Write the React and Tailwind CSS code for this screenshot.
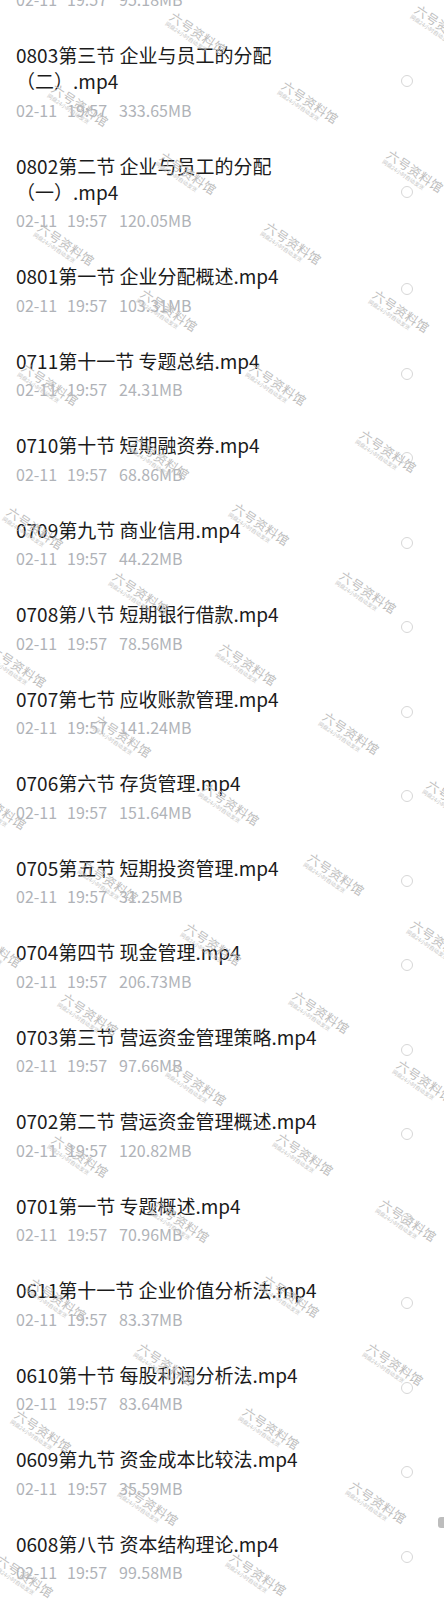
import React from "react";

const items = [
  ["0803第三节 企业与员工的分配（二）.mp4", "333.65MB"],
  ["0802第二节 企业与员工的分配（一）.mp4", "120.05MB"],
  ["0801第一节 企业分配概述.mp4", "103.31MB"],
  ["0711第十一节 专题总结.mp4", "24.31MB"],
  ["0710第十节 短期融资券.mp4", "68.86MB"],
  ["0709第九节 商业信用.mp4", "44.22MB"],
  ["0708第八节 短期银行借款.mp4", "78.56MB"],
  ["0707第七节 应收账款管理.mp4", "141.24MB"],
  ["0706第六节 存货管理.mp4", "151.64MB"],
  ["0705第五节 短期投资管理.mp4", "31.25MB"],
  ["0704第四节 现金管理.mp4", "206.73MB"],
  ["0703第三节 营运资金管理策略.mp4", "97.66MB"],
  ["0702第二节 营运资金管理概述.mp4", "120.82MB"],
  ["0701第一节 专题概述.mp4", "70.96MB"],
  ["0611第十一节 企业价值分析法.mp4", "83.37MB"],
  ["0610第十节 每股利润分析法.mp4", "83.64MB"],
  ["0609第九节 资金成本比较法.mp4", "35.59MB"],
  ["0608第八节 资本结构理论.mp4", "99.58MB"],
];

const marks = [
  [195, 37], [440, 30], [77, 109], [307, 106], [185, 177], [412, 175],
  [63, 248], [290, 247], [166, 314], [398, 315], [47, 388], [275, 388],
  [385, 455], [158, 462], [32, 532], [258, 528], [138, 597], [365, 596],
  [15, 670], [245, 668], [120, 740], [348, 737], [228, 808], [452, 805],
  [-5, 812], [107, 885], [333, 878], [210, 948], [436, 945], [-10, 950],
  [87, 1018], [318, 1016], [195, 1088], [422, 1085], [77, 1160], [302, 1158],
  [178, 1225], [405, 1224], [55, 1303], [288, 1300], [163, 1368], [392, 1368],
  [40, 1435], [268, 1432], [147, 1508], [375, 1506], [22, 1580], [255, 1578],
];

function Meta({ size }) {
  return (
    <div className="h-[22px] leading-[22px] text-[16px] text-[#b0b3b8] whitespace-nowrap">
      <span>02-11</span>
      <span className="ml-[10px]">19:57</span>
      <span className="ml-[12px]">{size}</span>
    </div>
  );
}

function Row({ title, size }) {
  return (
    <div className="flex items-center pl-4 pr-[31px] pt-4 pb-4">
      <div className="flex-1 min-w-0 flex flex-col gap-[4.5px]">
        <div className="text-[19px] leading-[26px] text-[#1b1b1b]">{title}</div>
        <Meta size={size} />
      </div>
      <div className="ml-[40px] w-3 h-3 shrink-0 rounded-full border-[1.5px] border-[#d7d7d7]" />
    </div>
  );
}

function Mark({ x, y }) {
  return (
    <div
      className="absolute w-[64px] -translate-x-1/2 -translate-y-1/2 rotate-[34deg] flex flex-col items-start leading-none"
      style={{ left: x, top: y }}
    >
      <span className="text-[12.5px] leading-[14px] text-[#bdbdbd] tracking-[0.5px] whitespace-nowrap">六号资料馆</span>
      <span className="text-[9px] leading-[10px] text-[#c6c6c6] whitespace-nowrap scale-[0.6] origin-top-left">网盘24小时自动发货</span>
    </div>
  );
}

export default function App() {
  return (
    <div className="relative w-[444px] h-[1600px] overflow-hidden bg-white font-['Noto_Sans_CJK_SC','Noto_Sans',sans-serif]">
      <div className="flex flex-col">
        <div className="pl-4 mt-[-12px] pb-4">
          <Meta size="95.18MB" />
        </div>
        {items.map(([t, s]) => (
          <Row key={t} title={t} size={s} />
        ))}
      </div>
      <div className="absolute inset-0 pointer-events-none">
        {marks.map(([x, y], i) => (
          <Mark key={i} x={x} y={y} />
        ))}
      </div>
      <div className="absolute left-[438px] top-[1517px] w-[6px] h-[11px] rounded-l-[3px] bg-[#bdbdbd]" />
    </div>
  );
}
